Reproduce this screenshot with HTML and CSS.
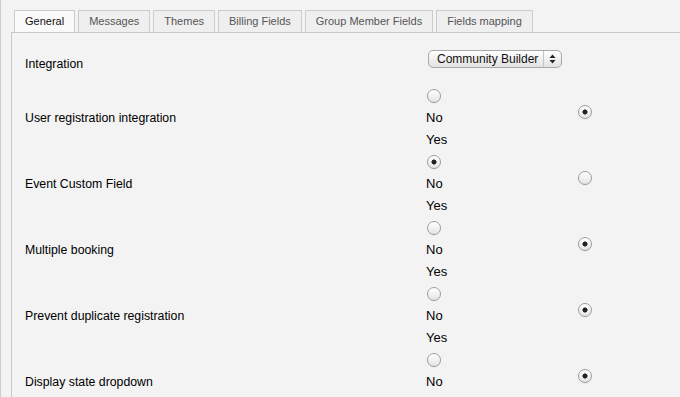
FILE: index.html
```html
<!DOCTYPE html>
<html>
<head>
<meta charset="utf-8">
<link rel="stylesheet" href="styles.css">
</head>
<body>
<div class="page">
  <ul class="tabs">
    <li class="tab active">General</li>
    <li class="tab">Messages</li>
    <li class="tab">Themes</li>
    <li class="tab">Billing Fields</li>
    <li class="tab">Group Member Fields</li>
    <li class="tab">Fields mapping</li>
  </ul>
  <div class="panel">
    <div class="row row-first">
      <div class="label label-int">Integration</div>
      <div class="val">
        <span class="select-wrap">
          <select class="select"><option>Community Builder</option></select>
          <span class="arrows"><svg width="7" height="10" viewBox="0 0 7 10"><path d="M3.5 0.5 L6.5 4 L0.5 4 Z M3.5 9.5 L6.5 6 L0.5 6 Z" fill="#222"/></svg></span>
        </span>
      </div>
      <div></div>
    </div>

    <div class="row">
      <div class="label">User registration integration</div>
      <div class="val stack">
        <div class="rb"><input type="radio" class="radio" name="r1"></div>
        <div class="opt opt-no">No</div>
        <div class="opt opt-yes">Yes</div>
      </div>
      <div class="third"><input type="radio" class="radio" name="r1" checked></div>
    </div>

    <div class="row">
      <div class="label">Event Custom Field</div>
      <div class="val stack">
        <div class="rb"><input type="radio" class="radio" name="r2" checked></div>
        <div class="opt opt-no">No</div>
        <div class="opt opt-yes">Yes</div>
      </div>
      <div class="third"><input type="radio" class="radio" name="r2"></div>
    </div>

    <div class="row">
      <div class="label">Multiple booking</div>
      <div class="val stack">
        <div class="rb"><input type="radio" class="radio" name="r3"></div>
        <div class="opt opt-no">No</div>
        <div class="opt opt-yes">Yes</div>
      </div>
      <div class="third"><input type="radio" class="radio" name="r3" checked></div>
    </div>

    <div class="row">
      <div class="label">Prevent duplicate registration</div>
      <div class="val stack">
        <div class="rb"><input type="radio" class="radio" name="r4"></div>
        <div class="opt opt-no">No</div>
        <div class="opt opt-yes">Yes</div>
      </div>
      <div class="third"><input type="radio" class="radio" name="r4" checked></div>
    </div>

    <div class="row row-last">
      <div class="label">Display state dropdown</div>
      <div class="val stack">
        <div class="rb"><input type="radio" class="radio" name="r5"></div>
        <div class="opt opt-no">No</div>
      </div>
      <div class="third"><input type="radio" class="radio" name="r5" checked></div>
    </div>
  </div>
</div>
</body>
</html>
```
FILE: styles.css
```css
html, body {
  margin: 0;
  padding: 0;
  background: #f3f3f3;
  font-family: "Liberation Sans", Arial, sans-serif;
  color: #000;
}

.page {
  border-left: 1px solid #cdcdcd;
  padding: 10px 0 0 10px;
  min-height: 100vh;
  box-sizing: border-box;
}

.tabs {
  list-style: none;
  margin: 0 0 0 3px;
  padding: 0;
  display: flex;
  gap: 3px;
}

.tab {
  height: 21px;
  line-height: 21px;
  padding: 0 10px;
  border: 1px solid #cccccc;
  border-bottom: none;
  background: #efefef;
  font-size: 11px;
  color: #555;
}

.tab.active {
  background: #fafafa;
  color: #111;
  padding: 0 10px;
}

.panel {
  border-top: 1px solid #c8c8c8;
  border-left: 1px solid #c8c8c8;
  padding-left: 13px;
}

.row {
  display: grid;
  grid-template-columns: 401px 151px 1fr;
  height: 66px;
  align-items: center;
}

.row-first {
  height: 52px;
}

.label {
  font-size: 12.3px;
}

.label-int {
  padding-top: 10px;
}

.val {
  font-size: 13px;
}

.stack {
  align-self: start;
  display: flex;
  flex-direction: column;
}

.rb {
  height: 21px;
  display: flex;
  align-items: center;
}

.opt-no {
  height: 23px;
  line-height: 23px;
}

.opt-yes {
  height: 22px;
  line-height: 22px;
}

.third {
  align-self: center;
  margin-bottom: 12px;
  height: 14px;
}

.radio {
  appearance: none;
  -webkit-appearance: none;
  margin: 0 0 0 1px;
  width: 14px;
  height: 14px;
  border-radius: 50%;
  border: 1px solid #9c9c9c;
  box-sizing: border-box;
  background: linear-gradient(#ffffff, #e4e4e4);
  box-shadow: inset 0 1px 1px rgba(255,255,255,0.9), 0 1px 0 rgba(0,0,0,0.04);
  display: block;
}

.radio:checked {
  background: radial-gradient(circle at 50% 50%, #222 0, #222 2px, #555 2.4px, transparent 2.8px), linear-gradient(#ffffff, #e4e4e4);
}

.select-wrap {
  position: relative;
  display: inline-block;
  margin-left: 2px;
  vertical-align: middle;
}

.select {
  appearance: none;
  -webkit-appearance: none;
  width: 134px;
  height: 18px;
  margin: 0;
  padding: 0 0 0 8px;
  border: 1px solid #a8a8a8;
  border-radius: 5px;
  background: linear-gradient(#ffffff, #f0f0f0 50%, #e2e2e2);
  font-family: "Liberation Sans", Arial, sans-serif;
  font-size: 12px;
  color: #111;
  box-sizing: border-box;
  display: block;
  line-height: 16px;
}

.arrows {
  position: absolute;
  top: 1px;
  right: 1px;
  width: 17px;
  height: 16px;
  border-left: 1px solid #c4c4c4;
  display: flex;
  align-items: center;
  justify-content: center;
  pointer-events: none;
}
```
